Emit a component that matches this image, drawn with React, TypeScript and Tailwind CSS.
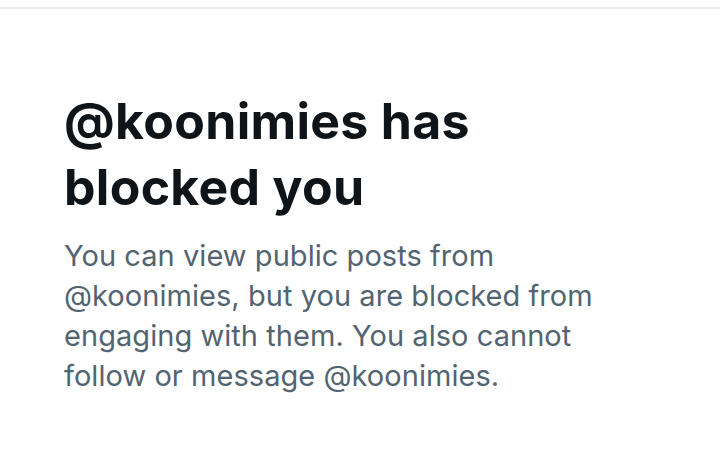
export default function App() {
  return (
    <div className="w-[720px] h-[451px] bg-white overflow-hidden" style={{ fontFamily: 'Inter, "Noto Sans", sans-serif' }}>
      <div className="h-[7px]" />
      <div className="h-[2px] bg-[#e7e9ea]" />
      <div className="pl-[64px] pr-[40px] pt-[79px]">
        <h1 className="text-[50px] leading-[66px] font-bold text-[#0f1419] tracking-[0.3px]">
          @koonimies has
          <br />
          blocked you
        </h1>
        <p className="mt-[16px] text-[29px] leading-[40px] text-[#536471] tracking-[0.05px]">
          You can view public posts from
          <br />
          @koonimies, but you are blocked from
          <br />
          engaging with them. You also cannot
          <br />
          follow or message @koonimies.
        </p>
      </div>
    </div>
  );
}
